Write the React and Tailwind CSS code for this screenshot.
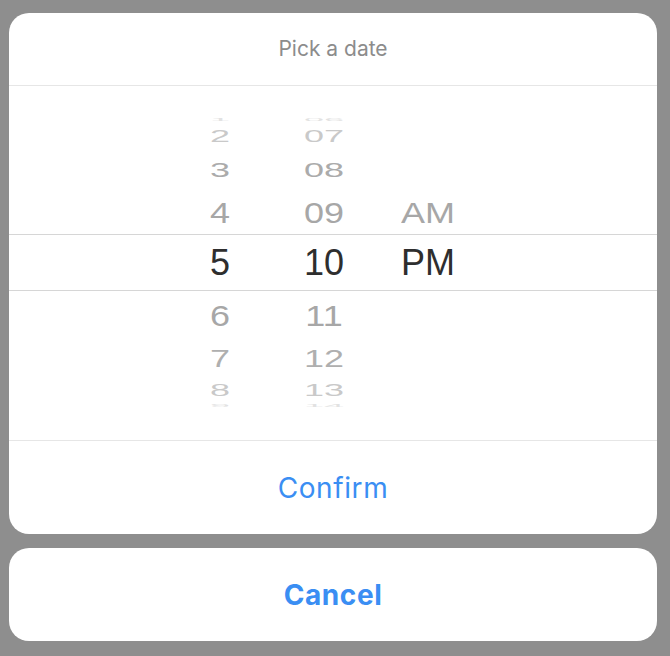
import React from 'react';

const rows = [
  { h: 'h-[17px]', hour: '1', min: '06', ampm: '', tone: 'text-[#e2e2e2]', fx: 'scale-y-[0.12]' },
  { h: 'h-[25px]', hour: '2', min: '07', ampm: '', tone: 'text-[#c9c9c9]', fx: 'scale-y-[0.44] -translate-y-[4px]' },
  { h: 'h-[38px]', hour: '3', min: '08', ampm: '', tone: 'text-[#ababab]', fx: 'scale-y-[0.58] -translate-y-[2px]' },
  { h: 'h-[43px]', hour: '4', min: '09', ampm: 'AM', tone: 'text-[#a7a7a7]', fx: 'scale-y-[0.8]' },
  { h: 'h-[57px]', hour: '5', min: '10', ampm: 'PM', tone: 'text-[#2e2e2e]', fx: '', selected: true },
  { h: 'h-[46px]', hour: '6', min: '11', ampm: '', tone: 'text-[#a7a7a7]', fx: 'scale-y-[0.82] translate-y-[2px]' },
  { h: 'h-[37px]', hour: '7', min: '12', ampm: '', tone: 'text-[#afafaf]', fx: 'scale-y-[0.64] translate-y-[3px]' },
  { h: 'h-[24px]', hour: '8', min: '13', ampm: '', tone: 'text-[#c9c9c9]', fx: 'scale-y-[0.44] translate-y-[5px]' },
  { h: 'h-[16px]', hour: '9', min: '14', ampm: '', tone: 'text-[#e2e2e2]', fx: 'scale-y-[0.12]' },
];

function WheelRow({ row }) {
  const cell = `w-[104px] text-center leading-none transform ${row.fx}`;
  return (
    <div
      className={`${row.h} flex items-center pl-[159px] text-[36px] ${row.tone} ${
        row.selected ? 'border-y border-[#d6d6d6]' : ''
      }`}
    >
      <span className={cell}>{row.hour}</span>
      <span className={cell}>{row.min}</span>
      <span className={cell}>{row.ampm}</span>
    </div>
  );
}

export default function App() {
  return (
    <div
      className="h-[656px] w-[670px] bg-[#8e8e8e] pl-[9px] pr-[13px] pt-[13px] flex flex-col gap-[14px]"
      style={{ fontFamily: 'Inter, "Liberation Sans", sans-serif' }}
    >
      {/* picker sheet */}
      <div className="h-[521px] bg-white rounded-[20px] flex flex-col overflow-hidden">
        <div className="h-[73px] flex items-center justify-center border-b border-[#e6e6e6] text-[21px] text-[#8c8c8c]">
          Pick a date
        </div>

        <div className="h-[355px] pt-[25px] border-b border-[#e6e6e6]" style={{ fontFamily: '"Liberation Sans", sans-serif' }}>
          {rows.map((r) => (
            <WheelRow key={r.hour} row={r} />
          ))}
        </div>

        <button className="flex-1 flex items-center justify-center text-[28px] tracking-[0.6px] text-[#3a8ef3]">
          Confirm
        </button>
      </div>

      {/* cancel */}
      <button className="h-[93px] bg-white rounded-[20px] flex items-center justify-center text-[28px] font-bold tracking-[0.6px] text-[#3a8ef3]">
        Cancel
      </button>
    </div>
  );
}
